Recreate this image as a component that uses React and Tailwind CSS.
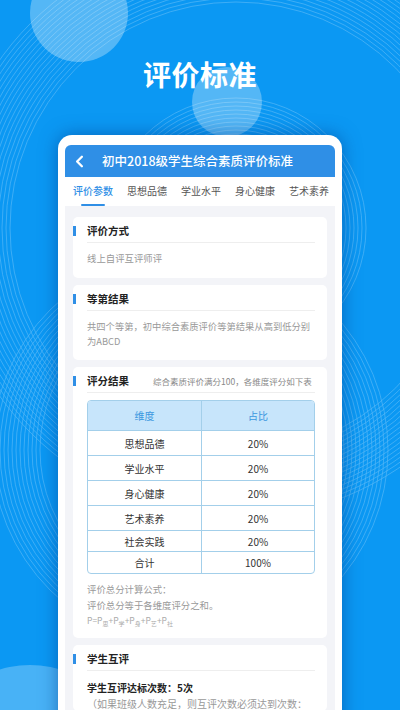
import { ChevronLeft } from "lucide-react";

const tabs = ["评价参数", "思想品德", "学业水平", "身心健康", "艺术素养"];

const rows = [
  ["思想品德", "20%", "h-[25px]"],
  ["学业水平", "20%", "h-[25px]"],
  ["身心健康", "20%", "h-[25px]"],
  ["艺术素养", "20%", "h-[25px]"],
  ["社会实践", "20%", "h-[21px]"],
  ["合计", "100%", "h-[22px]"],
];

function Backdrop() {
  const inner = [];
  for (let r = 62; r <= 130; r += 4) inner.push(r);
  const outer = [];
  for (let r = 226; r <= 290; r += 4) outer.push(r);
  const left = [];
  for (let r = 150; r <= 200; r += 4) left.push(r);
  return (
    <svg className="absolute inset-0" width="400" height="710" viewBox="0 0 400 710">
      <circle cx="79" cy="13" r="49" fill="#fff" opacity="0.3" />
      <circle cx="227" cy="102" r="35" fill="#fff" opacity="0.3" />
      <circle cx="30" cy="770" r="105" fill="#fff" opacity="0.25" />
      <g fill="none" stroke="#fff" strokeWidth="0.7" opacity="0.3">
        {inner.map((r) => (
          <circle key={"i" + r} cx="236" cy="228" r={r} />
        ))}
        {outer.map((r) => (
          <circle key={"o" + r} cx="236" cy="228" r={r} />
        ))}
        {left.map((r) => (
          <circle key={"l" + r} cx="190" cy="450" r={r} />
        ))}
      </g>
    </svg>
  );
}

function CardTitle({ children, extra }) {
  return (
    <div className="flex items-center h-[14px]">
      <div className="w-[3px] h-[10px] bg-[#2f8fe6]" />
      <span className="ml-[11px] text-[10.5px] font-bold text-[#222]">{children}</span>
      {extra && <span className="ml-[24px] text-[8.5px] text-[#888]">{extra}</span>}
    </div>
  );
}

function Card({ title, extra, children, className = "" }) {
  return (
    <div className={"bg-white rounded-[5px] pt-[7px] " + className}>
      <CardTitle extra={extra}>{title}</CardTitle>
      <div className="ml-[14px] mr-[12px] mt-[4px] border-t border-[#eeeeee]">{children}</div>
    </div>
  );
}

export default function App() {
  return (
    <div
      className="relative w-[400px] h-[710px] overflow-hidden bg-[#0b98f3]"
      style={{ fontFamily: '"Noto Sans CJK SC", "Noto Sans", sans-serif' }}
    >
      <Backdrop />
      <div className="relative flex flex-col items-center">
        <h1 className="mt-[55px] h-[38px] leading-[38px] text-[28px] font-bold text-white tracking-[0.5px]">
          评价标准
        </h1>
        <div className="mt-[42px] w-[284px] bg-white rounded-t-[14px] pt-[10px] pl-[7px] pr-[7px] shadow-[0_0_18px_rgba(0,60,140,0.55)]">
          <div className="rounded-t-[6px] overflow-hidden bg-[#f3f4f8] h-[600px]">
            <div className="h-[32px] bg-[#2f8fe6] flex items-center pl-[5px]">
              <ChevronLeft className="w-[19px] h-[19px] text-white" strokeWidth={3} />
              <span className="ml-[13px] text-[12.5px] font-medium text-white">
                初中2018级学生综合素质评价标准
              </span>
            </div>
            <div className="h-[29px] bg-white flex items-start pl-[8px] gap-[14px]">
              {tabs.map((t, i) => (
                <div key={t} className="flex flex-col items-center">
                  <span
                    className={
                      "mt-[7px] text-[10px] leading-[14px] whitespace-nowrap " +
                      (i === 0 ? "text-[#2f8fe6] font-medium" : "text-[#555]")
                    }
                  >
                    {t}
                  </span>
                  {i === 0 && <div className="mt-[6px] w-[24px] h-[2px] rounded bg-[#2f8fe6]" />}
                </div>
              ))}
            </div>

            <div className="px-[8px] pt-[11px] flex flex-col gap-[7px]">
              <Card title="评价方式">
                <p className="mt-[8px] pb-[12px] text-[9.4px] leading-[15px] text-[#999]">
                  线上自评互评师评
                </p>
              </Card>

              <Card title="等第结果">
                <p className="mt-[8px] pb-[11px] text-[9.3px] leading-[15px] text-[#999]">
                  共四个等第，初中综合素质评价等第结果从高到低分别为ABCD
                </p>
              </Card>

              <Card title="评分结果" extra="综合素质评价满分100，各维度评分如下表">
                <div className="mt-[7px] border border-[#a3cfea] rounded-[4px] overflow-hidden">
                  <div className="h-[29px] bg-[#c7e5fb] flex text-[10px] text-[#3a97df]">
                    <div className="w-[114px] flex items-center justify-center border-r border-[#a3cfea]">
                      维度
                    </div>
                    <div className="flex-1 flex items-center justify-center">占比</div>
                  </div>
                  {rows.map(([name, pct, h]) => (
                    <div key={name} className={"flex border-t border-[#a3cfea] text-[10px] text-[#333] " + h}>
                      <div className="w-[114px] flex items-center justify-center border-r border-[#a3cfea]">
                        {name}
                      </div>
                      <div className="flex-1 flex items-center justify-center">{pct}</div>
                    </div>
                  ))}
                </div>
                <div className="mt-[7px] pb-[10px] text-[9.4px] leading-[16px] text-[#999]">
                  <p>评价总分计算公式：</p>
                  <p>评价总分等于各维度评分之和。</p>
                  <p className="text-[8.5px] leading-[15px] text-[#aaa]">
                    P=P<sub className="text-[6px]">思</sub>+P<sub className="text-[6px]">学</sub>+P
                    <sub className="text-[6px]">身</sub>+P<sub className="text-[6px]">艺</sub>+P
                    <sub className="text-[6px]">社</sub>
                  </p>
                </div>
              </Card>

              <Card title="学生互评">
                <p className="mt-[9px] text-[10px] leading-[15px] font-bold text-[#222]">学生互评达标次数：5次</p>
                <p className="mt-[1px] text-[10px] leading-[15px] text-[#999]">
                  （如果班级人数充足，则互评次数必须达到次数：
                </p>
              </Card>
            </div>
          </div>
        </div>
      </div>
    </div>
  );
}
